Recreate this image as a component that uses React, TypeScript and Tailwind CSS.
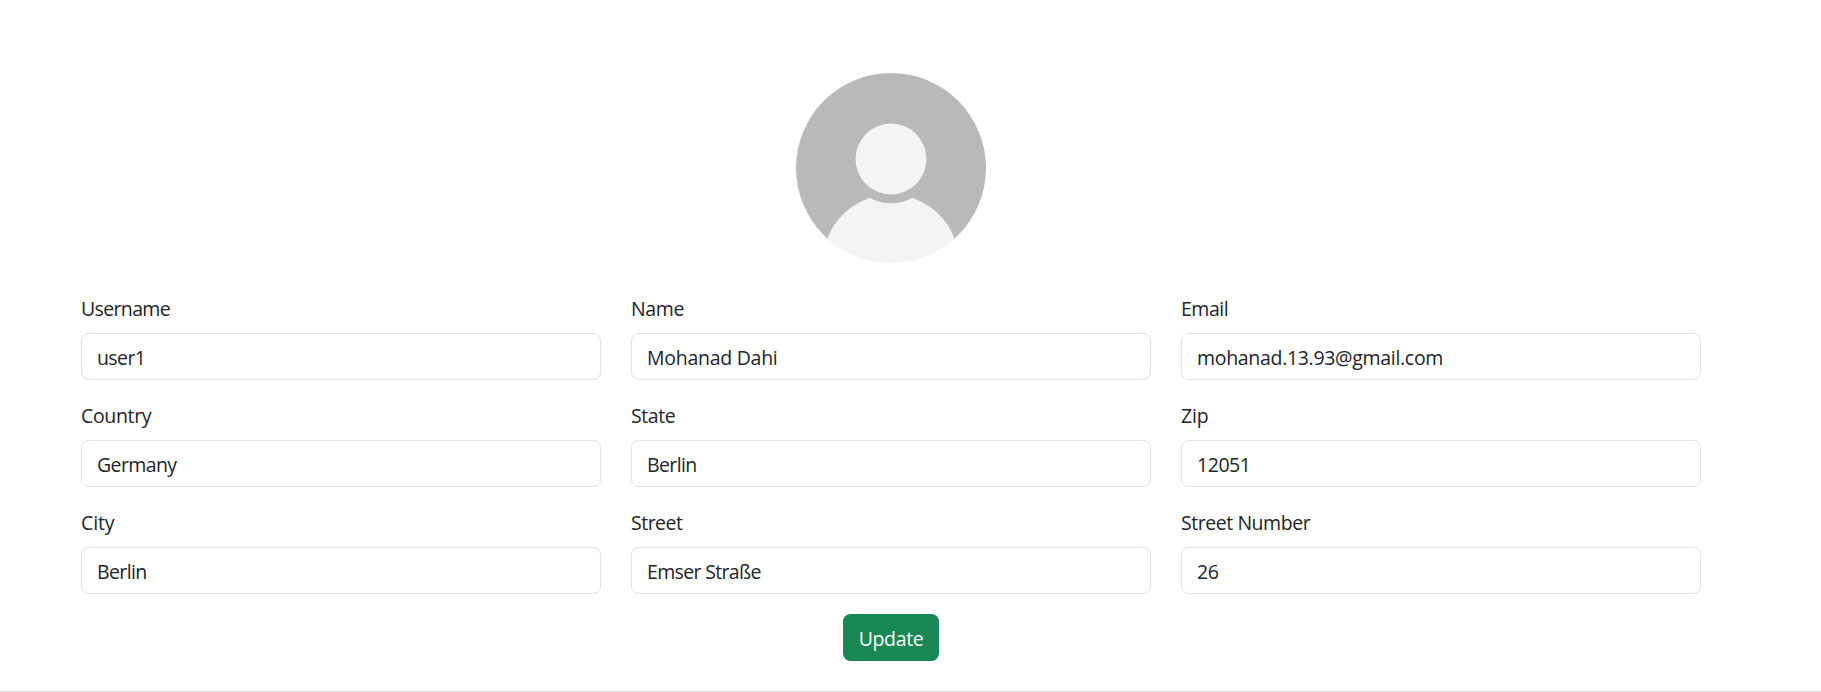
type FieldData = { id: string; label: string; value: string; labelTracking: string; valueTracking: string };

const fields: FieldData[] = [
  { id: 'username', label: 'Username', value: 'user1', labelTracking: 'tracking-[-0.65px]', valueTracking: 'tracking-[-0.6px]' },
  { id: 'name', label: 'Name', value: 'Mohanad Dahi', labelTracking: 'tracking-[-0.35px]', valueTracking: 'tracking-[-0.27px]' },
  { id: 'email', label: 'Email', value: 'mohanad.13.93@gmail.com', labelTracking: 'tracking-[-0.5px]', valueTracking: 'tracking-[-0.31px]' },
  { id: 'country', label: 'Country', value: 'Germany', labelTracking: 'tracking-[-0.33px]', valueTracking: 'tracking-[-0.6px]' },
  { id: 'state', label: 'State', value: 'Berlin', labelTracking: 'tracking-[-0.45px]', valueTracking: 'tracking-[-0.6px]' },
  { id: 'zip', label: 'Zip', value: '12051', labelTracking: 'tracking-[-0.2px]', valueTracking: 'tracking-[-0.45px]' },
  { id: 'city', label: 'City', value: 'Berlin', labelTracking: 'tracking-[-0.1px]', valueTracking: 'tracking-[-0.6px]' },
  { id: 'street', label: 'Street', value: 'Emser Straße', labelTracking: 'tracking-[-0.5px]', valueTracking: 'tracking-[-0.66px]' },
  { id: 'number', label: 'Street Number', value: '26', labelTracking: 'tracking-[-0.45px]', valueTracking: 'tracking-[-0.45px]' },
];

function Avatar() {
  return (
    <svg viewBox="0 0 190 190" className="h-[190px] w-[190px]" aria-hidden="true">
      <defs>
        <clipPath id="avatar-clip">
          <circle cx="95" cy="95" r="95" />
        </clipPath>
      </defs>
      <g clipPath="url(#avatar-clip)">
        <rect width="190" height="167" fill="#b9b9b9" />
        <circle cx="95" cy="189.5" r="68" fill="#f4f4f4" />
        <circle cx="95" cy="86" r="44.3" fill="#b9b9b9" />
        <circle cx="95" cy="86" r="35.5" fill="#f4f4f4" />
      </g>
    </svg>
  );
}

function Field({ id, label, value, labelTracking, valueTracking }: FieldData) {
  return (
    <div className="flex flex-col">
      <label htmlFor={id} className={`mb-[9px] self-start pt-px leading-[30px] ${labelTracking}`}>
        {label}
      </label>
      <input
        id={id}
        defaultValue={value}
        className={`h-[47px] w-full rounded-[7.5px] border border-[#dee2e6] bg-white px-[15px] pt-px leading-[30px] outline-none ${valueTracking}`}
      />
    </div>
  );
}

export default function App() {
  return (
    <div className="flex h-[692px] w-full flex-col items-center border-b border-[#d9dadb] bg-white pr-[39px] pt-[73px] font-['Open_Sans','Noto_Sans',sans-serif] text-[19.5px] text-[#212529]">
      <Avatar />
      <form className="mt-[30px] flex flex-col items-center" onSubmit={(e) => e.preventDefault()}>
        <div className="grid grid-cols-[520px_520px_520px] gap-x-[30px] gap-y-5">
          {fields.map((f) => (
            <Field key={f.id} {...f} />
          ))}
        </div>
        <button
          type="submit"
          className="mt-5 h-[47px] w-24 rounded-[7.5px] bg-[#198754] pt-[3px] leading-[30px] tracking-[-0.35px] text-white"
        >
          Update
        </button>
      </form>
    </div>
  );
}
